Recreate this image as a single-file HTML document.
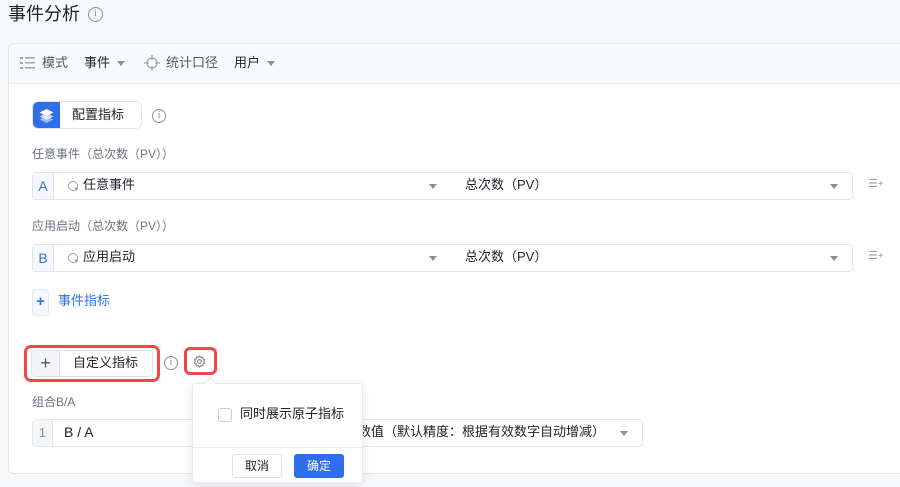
<!DOCTYPE html>
<html><head><meta charset="utf-8"><style>
*{box-sizing:border-box;margin:0;padding:0}
body{width:900px;height:487px;overflow:hidden;background:#f7f8fa;font-family:"Liberation Sans","Noto Sans CJK SC",sans-serif;color:#1d2129;font-size:13px;line-height:18px;position:relative}
.a{position:absolute}
.info{position:absolute;width:14px;height:14px;border:1.2px solid #8a8f99;border-radius:50%;color:#8a8f99;font-size:10px;line-height:12px;text-align:center;font-family:"Liberation Serif",serif}
.lbl{position:absolute;left:32px;color:#6b7280;font-size:12px}
.row{position:absolute;left:32px;width:821px;height:28px;border:1px solid #e3e5ea;border-radius:4px;background:#fff}
.let{position:absolute;left:0;top:0;width:21px;height:26px;background:#f5f8ff;border-right:1px solid #e3e5ea;color:#2f6fec;text-align:center;line-height:26px;font-size:14px}
.car{position:absolute;width:0;height:0;border-left:4px solid transparent;border-right:4px solid transparent;border-top:5px solid #8a8f99}
.srch{position:absolute;width:10px;height:10px;border:1.6px solid #9aa0a8;border-radius:50%}
.srch:after{content:"";position:absolute;left:6px;top:6px;width:3px;height:1.6px;background:#9aa0a8;transform:rotate(45deg)}
</style></head><body>
<div class="a" style="left:8px;top:3px;font-size:18px;line-height:22px;color:#1d2129">事件分析</div>
<div class="info" style="left:88px;top:7px;width:15px;height:15px">i</div>
<div class="a" style="left:8px;top:43px;width:900px;height:431px;background:#fff;border:1px solid #e3e5ea;border-radius:6px;overflow:hidden">
 <div class="a" style="left:0;top:0;width:100%;height:40px;background:#f9fafb;border-bottom:1px solid #e8eaee"></div>
</div>
<svg class="a" style="left:20px;top:56px" width="16" height="14"><g fill="#a0a5ad"><rect x="0" y="1" width="3" height="2"/><rect x="0" y="6" width="3" height="2"/><rect x="0" y="11" width="3" height="2"/><rect x="5" y="1" width="10" height="1.5"/><rect x="5" y="6" width="10" height="1.5"/><rect x="5" y="11" width="10" height="1.5"/></g></svg>
<div class="a" style="left:42px;top:54px;color:#4e5969">模式</div>
<div class="a" style="left:84px;top:54px;color:#1d2129">事件</div>
<div class="car" style="left:117px;top:61px"></div>
<svg class="a" style="left:144px;top:55px" width="16" height="16"><g stroke="#a0a5ad" fill="none" stroke-width="1.3"><circle cx="8" cy="8" r="5"/><path d="M8 0v5M8 11v5M0 8h5M11 8h5"/></g></svg>
<div class="a" style="left:166px;top:54px;color:#4e5969">统计口径</div>
<div class="a" style="left:234px;top:54px;color:#1d2129">用户</div>
<div class="car" style="left:267px;top:61px"></div>
<div class="a" style="left:32px;top:101px;width:110px;height:28px;border:1px solid #e3e5ea;border-radius:6px;background:#fff;overflow:hidden">
 <div class="a" style="left:0;top:0;width:27px;height:28px;background:#2f6fec"></div>
 <svg class="a" style="left:5px;top:5px" width="17" height="17"><g fill="#fff"><path d="M8.5 9l7 3.5-7 3.5-7-3.5z" opacity=".5"/><path d="M8.5 6l7 3.5-7 3.5-7-3.5z" opacity=".75"/><path d="M8.5 2l7 3.5-7 3.5-7-3.5z"/></g></svg>
 <div class="a" style="left:39px;top:4px;color:#1d2129">配置指标</div>
</div>
<div class="info" style="left:152px;top:109px">i</div>
<div class="lbl" style="top:145px">任意事件（总次数（PV））</div>
<div class="row" style="top:172px"><div class="let">A</div>
 <div class="srch" style="left:35px;top:8px"></div><div class="a" style="left:50px;top:3px">任意事件</div>
 <div class="car" style="left:396px;top:11px"></div>
 <div class="a" style="left:432px;top:3px">总次数（PV）</div>
 <div class="car" style="left:797px;top:11px"></div>
</div>
<div class="a" style="left:868px;top:182px;color:#9aa0a8;font-size:11px;line-height:4px">☰<span style="font-size:10px">+</span></div>
<div class="lbl" style="top:217px">应用启动（总次数（PV））</div>
<div class="row" style="top:244px"><div class="let">B</div>
 <div class="srch" style="left:35px;top:8px"></div><div class="a" style="left:50px;top:3px">应用启动</div>
 <div class="car" style="left:396px;top:11px"></div>
 <div class="a" style="left:432px;top:3px">总次数（PV）</div>
 <div class="car" style="left:797px;top:11px"></div>
</div>
<div class="a" style="left:868px;top:254px;color:#9aa0a8;font-size:11px;line-height:4px">☰<span style="font-size:10px">+</span></div>
<div class="a" style="left:32px;top:289px;width:17px;height:27px;border:1px solid #e3e8f5;border-radius:4px;background:#f5f8ff;color:#2f6fec;text-align:center;line-height:24px;font-weight:bold;font-size:15px">+</div>
<div class="a" style="left:58px;top:292px;color:#2f6fec">事件指标</div>
<div class="a" style="left:24px;top:345px;width:136px;height:37px;border:3.5px solid #f04848;border-radius:7px"></div>
<div class="a" style="left:31px;top:350px;width:122px;height:27px;border:1px solid #dfe1e6;border-radius:4px;background:#fff;overflow:hidden">
 <div class="a" style="left:0;top:0;width:28px;height:27px;background:#f2f3f5;border-right:1px solid #dfe1e6;color:#4e5969;text-align:center;line-height:24px;font-size:18px">+</div>
 <div class="a" style="left:41px;top:3px">自定义指标</div>
</div>
<div class="info" style="left:164px;top:356px">i</div>
<div class="a" style="left:184px;top:347px;width:33px;height:28px;border:3.5px solid #f04848;border-radius:6px"></div>
<svg class="a" style="left:193px;top:355px" width="13" height="13" viewBox="0 0 14 14"><g fill="none" stroke="#8a8f99" stroke-width="1.3"><circle cx="7" cy="7" r="2"/><path d="M7 1l1.2 1.6 2-.4.5 2 1.8.9-.9 1.9.9 1.9-1.8.9-.5 2-2-.4L7 13l-1.2-1.6-2 .4-.5-2-1.8-.9.9-1.9-.9-1.9 1.8-.9.5-2 2 .4z"/></g></svg>
<div class="lbl" style="top:393px">组合B/A</div>
<div class="a" style="left:32px;top:419px;width:611px;height:28px;border:1px solid #e3e5ea;border-radius:4px;background:#fff">
 <div class="a" style="left:0;top:0;width:20px;height:26px;background:#f5f6f8;border-right:1px solid #e3e5ea;color:#8a8f99;text-align:center;line-height:26px">1</div>
 <div class="a" style="left:31px;top:3px;font-size:14px">B / A</div>
 <div class="a" style="left:325px;top:3px">数值（默认精度：根据有效数字自动增减）</div>
 <div class="car" style="left:587px;top:11px"></div>
</div>
<div class="a" style="left:192px;top:383px;width:171px;height:100px;background:#fff;border:1px solid #e8eaee;border-radius:4px;box-shadow:0 2px 10px rgba(0,0,0,.1)">
 <div class="a" style="left:13px;top:-5px;width:9px;height:9px;background:#fff;border-left:1px solid #e8eaee;border-top:1px solid #e8eaee;transform:rotate(45deg)"></div>
 <div class="a" style="left:25px;top:24px;width:14px;height:14px;border:1px solid #c9cdd4;border-radius:3px"></div>
 <div class="a" style="left:47px;top:21px">同时展示原子指标</div>
 <div class="a" style="left:0;top:63px;width:100%;border-top:1px solid #e8eaee"></div>
 <div class="a" style="left:39px;top:70px;width:50px;height:24px;border:1px solid #dfe1e6;border-radius:3px;text-align:center;line-height:22px;font-size:12px">取消</div>
 <div class="a" style="left:101px;top:70px;width:50px;height:24px;background:#2f6fec;border-radius:3px;text-align:center;line-height:24px;font-size:12px;color:#fff">确定</div>
</div>
</body></html>
